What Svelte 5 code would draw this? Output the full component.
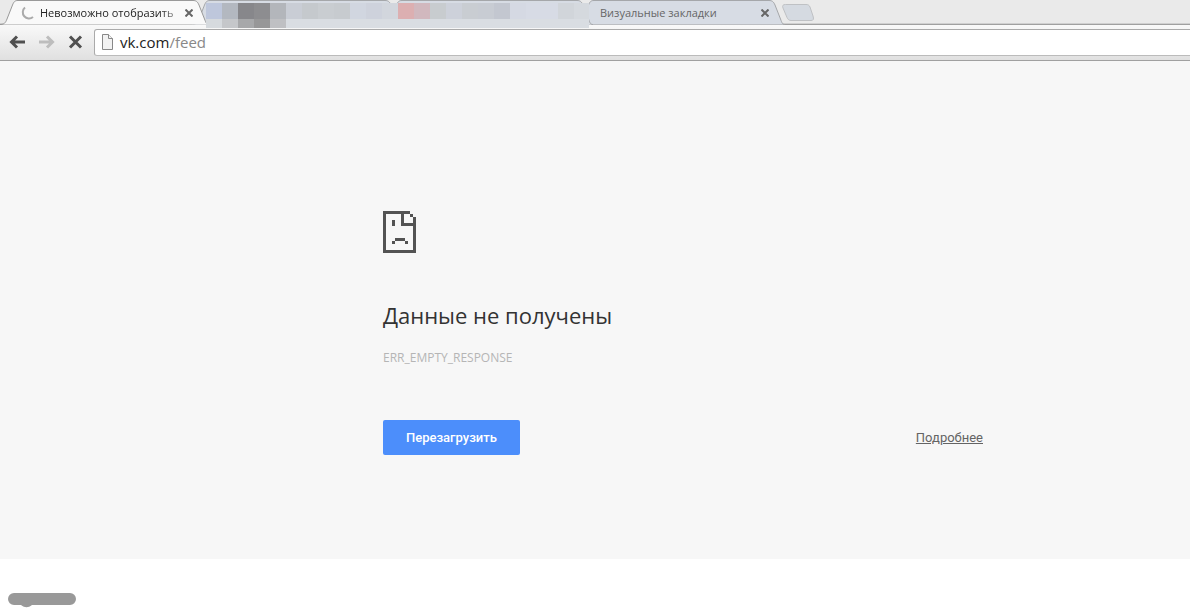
<script lang="ts">
    interface Tab {
        title: string;
        active?: boolean;
        hidden?: boolean;
    }

    let address = $state("vk.com/feed");

    let tabs = $state<Tab[]>([
        { title: "Невозможно отобразить", active: true },
        { title: "", hidden: true },
        { title: "", hidden: true },
        { title: "Визуальные закладки" },
    ]);

    // Colours of the mosaic over the two private tabs
    const topRow = [
        "#bec7dc", "#b3b8c0", "#87878b", "#8d8d90", "#b3b6bb", "#c9cdd5",
        "#c5c9cd", "#c9cdd1", "#c7cbcf", "#d1d6e0", "#ced2dc", "#d2d6dd",
        "#dcafb1", "#d1b8be", "#c8cccf", "#cdd1da", "#c9cdd2", "#c8ccd3",
        "#c3c7d0", "#d5d9e3", "#d7dbe5", "#d7dbe5", "#d1d5da", "#d5d9de",
    ];
    const bottomRow = [
        "#d6dade", "#c5c7ca", "#a7a8aa", "#979798", "#bfc0c3",
        ...Array(19).fill("#d9dde2"),
    ];
</script>

<header class="browser">
    <div class="tab-strip">
        {#each tabs as tab, i}
            <div class="tab" class:active={tab.active} style="z-index: {9 - i}">
                <svg class="tab-shape" width="209" height="25" viewBox="0 0 209 25">
                    <path
                        d="M0 24.5C4 24.5 5.500 23 7 19L12.500 5C14 1.500 15 .5 18 .5H193C196 .5 197.500 1.500 199 5L204.500 19C206 23 206.500 24.500 209 24.500"
                    />
                </svg>
                {#if !tab.hidden}
                    <div class="tab-content">
                        {#if tab.active}
                            <svg class="spinner" width="16" height="16" viewBox="0 0 16 16">
                                <path d="M5 2.500A5.800 5.800 0 1 0 13 12" />
                            </svg>
                        {/if}
                        <span class="tab-title">{tab.title}</span>
                        <button class="tab-close" aria-label="Закрыть вкладку">
                            <svg width="8" height="8" viewBox="0 0 8 8">
                                <path d="M.5 .5L7.500 7.500M7.500 .5L.5 7.500" />
                            </svg>
                        </button>
                    </div>
                {/if}
            </div>
        {/each}
        <button class="new-tab" aria-label="Новая вкладка">
            <svg width="33" height="17" viewBox="0 0 33 17">
                <path
                    d="M3.500 .5H24C26 .5 27 1 28 3L31 12C32 15 31.500 16.500 29 16.500H9C7 16.500 6 15.500 5 13.500L1 4C0 1.500 1 .5 3.500 .5Z"
                />
            </svg>
        </button>
        <div class="mosaic">
            {#each [...topRow, ...bottomRow] as color}
                <i style="background: {color}"></i>
            {/each}
        </div>
    </div>

    <nav class="toolbar">
        <button class="tool" aria-label="Назад">
            <svg width="18" height="16" viewBox="0 0 18 16">
                <path d="M9 2.500L3.500 8L9 13.500M4 8H17" />
            </svg>
        </button>
        <button class="tool" aria-label="Вперёд" disabled>
            <svg width="18" height="16" viewBox="0 0 18 16">
                <path d="M10 2.500L15.500 8L10 13.500M15 8H2" />
            </svg>
        </button>
        <button class="tool" aria-label="Остановить">
            <svg width="18" height="16" viewBox="0 0 18 16">
                <path d="M4 2.500L15 13.500M15 2.500L4 13.500" />
            </svg>
        </button>
        <label class="omnibox">
            <svg width="13" height="16" viewBox="0 0 13 16">
                <path d="M1.500 .5H7.500L11.500 4.500V15.500H1.500Z" />
                <path d="M7.500 .5V4.500H11.500" />
            </svg>
            <span class="url">
                <span class="url-text" aria-hidden="true"
                    >{address.split("/")[0]}<span>/{address.split("/")[1]}</span></span
                >
                <input type="text" aria-label="Адрес" bind:value={address} />
            </span>
        </label>
    </nav>
</header>

<main>
    <div class="error">
        <svg class="sad-page" width="33" height="42" viewBox="0 0 33 42" shape-rendering="crispEdges">
            <path
                d="M0 0H27V3H21V12H30V9H33V42H0ZM3 3V39H30V15H18V3ZM27 3H30V6H27ZM30 6H33V9H30ZM9 9H12V15H9ZM12 27H22V30H12ZM9 30H12V33H9ZM22 30H25V33H22Z"
                fill-rule="evenodd"
            />
        </svg>
        <h1>Данные не получены</h1>
        <p class="code">ERR_EMPTY_RESPONSE</p>
        <div class="actions">
            <button class="reload">Перезагрузить</button>
            <a href="#details">Подробнее</a>
        </div>
    </div>
</main>

<footer>
    <svg width="68" height="15" viewBox="0 0 68 15">
        <path d="M6 0H62A6 6 0 0 1 62 12H24C20 15 17 15 13 12H6A6 6 0 0 1 6 0Z" />
    </svg>
</footer>

<style>
    :global(body) {
        margin: 0;
        background: #fff;
        overflow-x: hidden;
    }

    button {
        margin: 0;
        padding: 0;
        border: none;
        background: none;
        cursor: pointer;
    }

    svg {
        display: block;
        flex: none;
    }

    .browser,
    .error {
        font-family: "Open Sans", "Noto Sans", sans-serif;
    }

    .tab-strip {
        position: relative;
        display: flex;
        height: 25px;
        background: linear-gradient(#eaeaea 23px, #d0d0d0 23px, #d0d0d0 24px, #a0a0a0 24px);
    }

    .tab {
        position: relative;
        flex: none;
        width: 207px;
        margin-right: -15px;
    }

    .tab-shape {
        position: absolute;
        top: 0;
        left: 0;
        fill: #d7dce4;
        stroke: #a5a7aa;
    }

    .tab.active .tab-shape {
        fill: #f9f9f9;
        stroke: #999;
    }

    .tab-content {
        position: relative;
        display: flex;
        align-items: center;
        height: 25px;
        padding: 0 14px 0 24px;
    }

    .tab.active .tab-content {
        padding-left: 20px;
    }

    .spinner {
        margin-right: 4px;
        fill: none;
        stroke: #aaa;
        stroke-width: 2;
    }

    .tab-title {
        flex: 1;
        white-space: nowrap;
        font-size: 11px;
        line-height: 16px;
        color: #666;
    }

    .tab.active .tab-title {
        color: #222;
        mask-image: linear-gradient(90deg, #000 85%, #0004);
    }

    .tab-close {
        margin-left: 4px;
        stroke: #666;
        stroke-width: 2;
    }

    .new-tab {
        margin: 4px 0 0 14px;
        align-self: flex-start;
        fill: #d5dae1;
        stroke: #bfc1c4;
    }

    .mosaic {
        position: absolute;
        top: 3px;
        left: 206px;
        z-index: 10;
        display: grid;
        grid-template-columns: repeat(24, 16px);
        grid-template-rows: 16px 9px;
        width: 383px;
        overflow: hidden;
    }

    .toolbar {
        display: flex;
        align-items: center;
        box-sizing: border-box;
        height: 36px;
        padding: 0 0 1px 8px;
        background: linear-gradient(#f9f9f9, #e0e0e0);
        border-bottom: 1px solid #a0a0a0;
    }

    .tool {
        width: 18px;
        margin-right: 11px;
        fill: none;
        stroke: #505050;
        stroke-width: 3;
    }

    .tool:disabled {
        stroke: #bdbdbd;
    }

    .omnibox {
        display: flex;
        flex: 1;
        align-items: center;
        box-sizing: border-box;
        height: 27px;
        margin: 0 -4px 0 -1px;
        padding-left: 6px;
        background: #fff;
        border: 1px solid #aaa;
        border-bottom-color: #bbb;
        border-radius: 3px;
    }

    .omnibox svg {
        margin-right: 6px;
        fill: #f2f2f2;
        stroke: #888;
    }

    .url {
        display: grid;
        flex: 1;
        font-size: 15px;
        line-height: 22px;
    }

    .url-text,
    .url input {
        grid-area: 1 / 1;
        color: #222;
    }

    .url-text span {
        color: #888;
    }

    .url input {
        width: 100%;
        padding: 0;
        border: none;
        outline: none;
        background: none;
        font: inherit;
        color: transparent;
        caret-color: #222;
    }

    main {
        padding: 150px 24px 104px 383px;
        background: #f7f7f7;
    }

    .error {
        max-width: 600px;
    }

    .sad-page {
        fill: #535353;
    }

    h1 {
        margin: 45px 0 0;
        font-size: 22px;
        font-weight: 400;
        line-height: 34px;
        color: #333;
    }

    .code {
        margin: 17px 0 0;
        font-size: 12px;
        line-height: 18px;
        color: #b5b5b5;
    }

    .actions {
        display: flex;
        align-items: center;
        justify-content: space-between;
        margin-top: 53px;
        font-family: Roboto, sans-serif;
    }

    .reload {
        padding: 0 23px;
        border-radius: 2px;
        background: #4c8efb;
        font-family: inherit;
        font-size: 13px;
        font-weight: 500;
        line-height: 35px;
        color: #fff;
    }

    .actions a {
        font-size: 13px;
        line-height: 18px;
        color: #646464;
    }

    footer {
        padding: 34px 8px 2px;
        fill: #999;
    }
</style>
